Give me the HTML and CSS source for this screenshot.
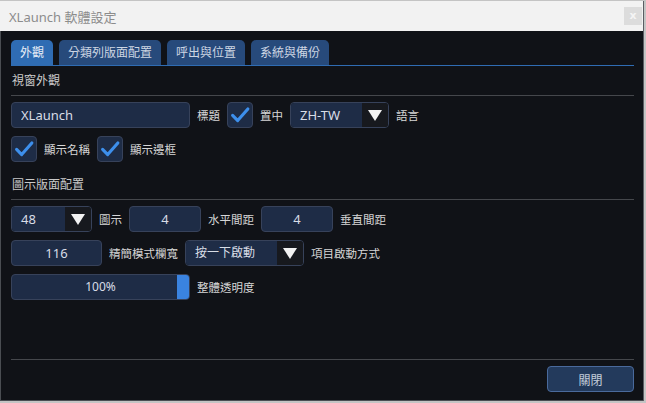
FILE: index.html
```html
<!DOCTYPE html>
<html lang="zh-Hant">
<head>
  <meta charset="UTF-8" />
  <title>XLaunch 軟體設定</title>
  <link rel="stylesheet" href="styles.css">
</head>
<body>
  <div class="window">
    <div class="titlebar">
      <span class="title">XLaunch 軟體設定</span>
      <button class="close-x">x</button>
    </div>

    <div class="content">
      <div class="tabs">
        <div class="tab active">外觀</div>
        <div class="tab">分類列版面配置</div>
        <div class="tab">呼出與位置</div>
        <div class="tab">系統與備份</div>
      </div>

      <div class="section-title">視窗外觀</div>
      <div class="row">
        <input class="field w-title" type="text" value="XLaunch">
        <span class="label">標題</span>
        <span class="check">
          <svg viewBox="0 0 26 26"><path d="M5 13.5l5.5 5.5L21.5 6.5"/></svg>
        </span>
        <span class="label">置中</span>
        <div class="select w-lang">
          <span class="value">ZH-TW</span>
          <span class="arrow"></span>
        </div>
        <span class="label">語言</span>
      </div>
      <div class="row">
        <span class="check">
          <svg viewBox="0 0 26 26"><path d="M5 13.5l5.5 5.5L21.5 6.5"/></svg>
        </span>
        <span class="label">顯示名稱</span>
        <span class="check">
          <svg viewBox="0 0 26 26"><path d="M5 13.5l5.5 5.5L21.5 6.5"/></svg>
        </span>
        <span class="label">顯示邊框</span>
      </div>

      <div class="section-title second">圖示版面配置</div>
      <div class="row">
        <div class="select w-size">
          <span class="value">48</span>
          <span class="arrow"></span>
        </div>
        <span class="label">圖示</span>
        <input class="field num w-gap" type="text" value="4">
        <span class="label">水平間距</span>
        <input class="field num w-gap" type="text" value="4">
        <span class="label">垂直間距</span>
      </div>
      <div class="row">
        <input class="field num w-col" type="text" value="116">
        <span class="label">精簡模式欄寬</span>
        <div class="select w-launch">
          <span class="value">按一下啟動</span>
          <span class="arrow"></span>
        </div>
        <span class="label">項目啟動方式</span>
      </div>
      <div class="row">
        <div class="slider">
          <span class="slider-text">100%</span>
          <span class="thumb"></span>
        </div>
        <span class="label">整體透明度</span>
      </div>

      <div class="footer">
        <button class="btn">關閉</button>
      </div>
    </div>
  </div>
</body>
</html>
```

FILE: styles.css
```css
body {
  margin: 0;
  background-color: #c4c4c4;
  font-family: "Noto Sans", "Noto Sans CJK TC", sans-serif;
  font-size: 12px;
}

.window {
  margin-top: 1px;
  width: 643px;
  height: 400px;
  border-right: 1px solid #5a5d63;
  display: flex;
  flex-direction: column;
  background-color: #101217;
}

.titlebar {
  height: 30px;
  background-color: #f2f2f2;
  display: flex;
  align-items: center;
  justify-content: space-between;
  padding: 0 1px 0 9px;
}

.title {
  font-size: 13px;
  color: #8c8c8c;
}

.close-x {
  width: 18px;
  height: 18px;
  border: none;
  padding: 0;
  background-color: #dcdcdc;
  color: #f4f4f4;
  font-size: 11px;
  font-weight: bold;
  line-height: 18px;
  font-family: "DejaVu Sans", sans-serif;
}

.content {
  flex: 1;
  display: flex;
  flex-direction: column;
  border-left: 1px solid #4a4d52;
  border-bottom: 1px solid #4a4d52;
  padding: 0 9px 0 10px;
}

/* tab strip */
.tabs {
  display: flex;
  gap: 6px;
  margin-top: 9px;
  border-bottom: 1px solid #2f6cb3;
}

.tab {
  height: 25px;
  line-height: 25px;
  padding: 0 9px;
  background-color: #274a7b;
  color: #cdd6e3;
  border-radius: 5px 5px 0 0;
  font-size: 12px;
}

.tab.active {
  background-color: #2f6cb3;
  color: #e6edf6;
}

.section-title {
  padding: 5px 1px 4px;
  line-height: 20px;
  color: #c9c9c9;
  border-bottom: 1px solid #45474c;
}

.section-title.second {
  margin-top: 8px;
}

.row {
  display: flex;
  align-items: center;
  gap: 7px;
  height: 26px;
  margin-top: 8px;
}

.section-title + .row {
  margin-top: 6px;
}

.label {
  color: #d6d6d6;
  font-size: 11.5px;
  white-space: nowrap;
}

.field {
  box-sizing: border-box;
  height: 26px;
  margin: 0;
  padding: 0 9px;
  background-color: #1e2c46;
  border: 1px solid #37425a;
  border-radius: 4px;
  color: #d8dde6;
  font-family: "Noto Sans", "Noto Sans CJK TC", sans-serif;
  font-size: 13px;
  outline: none;
}

.field.num {
  text-align: center;
}

.w-title { width: 179px; }
.w-gap { width: 72px; }
.w-col { width: 91px; }

.check {
  box-sizing: border-box;
  width: 26px;
  height: 26px;
  background-color: #1e2c46;
  border: 1px solid #37425a;
  border-radius: 4px;
  display: flex;
}

.check svg {
  width: 24px;
  height: 24px;
  fill: none;
  stroke: #3d8fec;
  stroke-width: 3.4;
  stroke-linecap: round;
  stroke-linejoin: round;
}

.select {
  box-sizing: border-box;
  height: 26px;
  display: flex;
  border: 1px solid #37425a;
  border-radius: 4px;
  overflow: hidden;
}

.select .value {
  flex: 1;
  background-color: #1e2c46;
  color: #d8dde6;
  line-height: 24px;
  padding-left: 9px;
  font-size: 13px;
}

.select .arrow {
  width: 26px;
  background-color: #17191e;
  display: flex;
  align-items: center;
  justify-content: center;
}

.select .arrow::after {
  content: "";
  border-left: 7px solid transparent;
  border-right: 7px solid transparent;
  border-top: 11px solid #f2f2f2;
}

.w-lang { width: 99px; }
.w-size { width: 81px; }
.w-launch { width: 119px; }

.select.w-launch .value {
  font-size: 12px;
}

/* opacity slider */
.slider {
  box-sizing: border-box;
  width: 179px;
  height: 26px;
  display: flex;
  background-color: #1e2c46;
  border: 1px solid #37425a;
  border-radius: 4px;
  overflow: hidden;
}

.slider-text {
  flex: 1;
  padding-left: 12px;
  text-align: center;
  line-height: 24px;
  color: #d8dde6;
}

.thumb {
  width: 12px;
  background-color: #3a83e0;
}

.footer {
  margin-top: auto;
  border-top: 1px solid #45474c;
  padding: 6px 0 8px;
  display: flex;
  justify-content: flex-end;
}

.btn {
  width: 87px;
  height: 26px;
  background-color: #233a5c;
  border: 1px solid #4a6a9c;
  border-radius: 4px;
  color: #c5cedb;
  font-family: "Noto Sans CJK TC", sans-serif;
  font-size: 12px;
}
```
